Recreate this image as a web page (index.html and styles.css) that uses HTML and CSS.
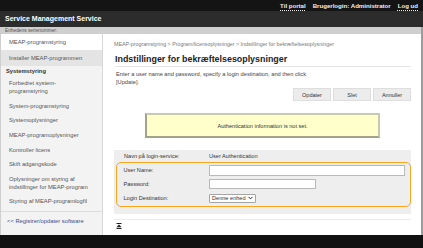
FILE: index.html
```html
<!DOCTYPE html>
<html lang="da">
<head>
<meta charset="utf-8">
<title>Service Management Service</title>
<link rel="stylesheet" href="styles.css">
</head>
<body>
<div class="page">
  <div class="topbar">
    <a class="toplink" href="#">Til portal</a>
    <span class="user">Brugerlogin: Administrator</span>
    <a class="toplink" href="#">Log ud</a>
  </div>
  <div class="header">Service Management Service</div>
  <div class="frame">
    <div class="serial">Enhedens serienummer:</div>
    <div class="main">
      <nav class="sidebar">
        <div class="nav-item nav-top">MEAP-programstyring</div>
        <div class="nav-item nav-current">Installer MEAP-programmen</div>
        <div class="nav-head">Systemstyring</div>
        <div class="nav-item">Forbedret system-<br>programstyring</div>
        <div class="nav-item">System-programstyring</div>
        <div class="nav-item">Systemoplysninger</div>
        <div class="nav-item">MEAP-programoplysninger</div>
        <div class="nav-item">Kontroller licens</div>
        <div class="nav-item">Skift adgangskode</div>
        <div class="nav-item">Oplysninger om styring af<br>indstillinger for MEAP-program</div>
        <div class="nav-item nav-last">Styring af MEAP-programlogfil</div>
        <div class="nav-link">&lt;&lt; Registrer/opdater software</div>
      </nav>
      <section class="content">
        <div class="crumbs">MEAP-programstyring &gt; Program/licensoplysninger &gt; Indstillinger for bekræftelsesoplysninger</div>
        <h1 class="title">Indstillinger for bekræftelsesoplysninger</h1>
        <p class="desc">Enter a user name and password, specify a login destination, and then click<br>[Update].</p>
        <div class="buttons">
          <button class="btn">Opdater</button>
          <button class="btn">Slet</button>
          <button class="btn">Annuller</button>
        </div>
        <div class="notice">Authentication information is not set.</div>
        <div class="panel">
          <div class="row row-plain">
            <span class="label">Navn på login-service:</span>
            <span class="value">User Authentication</span>
          </div>
          <div class="highlight">
            <div class="row">
              <span class="label">User Name:</span>
              <span class="input input-wide"></span>
            </div>
            <div class="row">
              <span class="label">Password:</span>
              <span class="input input-mid"></span>
            </div>
            <div class="row">
              <span class="label">Login Destination:</span>
              <span class="select"><span class="select-text">Denne enhed</span><svg class="chev" viewBox="0 0 6 4" width="5" height="4"><path d="M0.6 0.6 L3 3 L5.4 0.6" fill="none" stroke="#222" stroke-width="1.2"/></svg></span>
            </div>
          </div>
        </div>
        <div class="totop">
          <svg viewBox="0 0 6 6" width="6" height="6"><rect x="0.5" y="0" width="5" height="1" fill="#222"/><path d="M3 1.6 L5.6 4.2 L0.4 4.2 Z" fill="#222"/><rect x="0.5" y="5" width="5" height="1" fill="#222"/></svg>
        </div>
      </section>
    </div>
  </div>
  <div class="footer"></div>
</div>
</body>
</html>
```
FILE: styles.css
```css
*, *::before, *::after {
  box-sizing: border-box;
}
html, body {
  margin: 0;
  padding: 0;
  background: #ffffff;
}
body {
  font-family: "Liberation Sans", Arial, sans-serif;
  color: #333;
}
.page {
  width: 423px;
  height: 248px;
  overflow: hidden;
  display: flex;
  flex-direction: column;
}
.topbar {
  height: 11px;
  flex-shrink: 0;
  background: #141414;
  display: flex;
  justify-content: flex-end;
  align-items: center;
  gap: 7px;
  padding-right: 5px;
  font-size: 6.1px;
  font-weight: bold;
  color: #f0f0f0;
}
.toplink {
  color: #f0f0f0;
  text-decoration: underline dotted;
  text-underline-offset: 1.5px;
}
.user {
  color: #f0f0f0;
}
.header {
  height: 16px;
  flex-shrink: 0;
  background: #2c2c2c;
  color: #ffffff;
  font-weight: bold;
  font-size: 7px;
  line-height: 16px;
  padding-left: 5px;
}
.frame {
  flex: 1;
  display: flex;
  flex-direction: column;
  border-right: 2px solid #9d9d9d;
  min-height: 0;
}
.serial {
  height: 7px;
  flex-shrink: 0;
  background: #cfcfcf;
  font-size: 4.8px;
  line-height: 7px;
  color: #555;
  padding-left: 5px;
}
.main {
  flex: 1;
  display: flex;
  min-height: 0;
}
.sidebar {
  width: 103px;
  flex-shrink: 0;
  background: #f3f3f3;
  border-right: 1px solid #d8d8d8;
  border-left: 1px solid #cfcfcf;
  font-size: 5.8px;
  color: #555;
  display: flex;
  flex-direction: column;
}
.nav-item {
  padding: 3.3px 0 3.3px 8px;
  line-height: 8px;
}
.nav-top {
  background: #ffffff;
  padding-top: 4px;
  padding-bottom: 4px;
}
.nav-current {
  background: #e4e4e4;
  padding-top: 4px;
  padding-bottom: 4px;
}
.nav-head {
  font-weight: bold;
  color: #333;
  padding: 1px 0 1px 5px;
  line-height: 8px;
}
.nav-last {
  border-bottom: 1px solid #dcdcdc;
  padding-bottom: 5.5px;
}
.nav-link {
  padding: 5px 0 0 6px;
  line-height: 8px;
  color: #3a4d8f;
}
.content {
  flex: 1;
  padding: 6px 10px 0 11px;
  display: flex;
  flex-direction: column;
}
.crumbs {
  font-size: 5.3px;
  color: #777;
  line-height: 8px;
}
.title {
  margin: 5px 0 0 1px;
  font-size: 8.9px;
  font-weight: bold;
  color: #222;
  line-height: 12px;
  padding-bottom: 1px;
  border-bottom: 1px solid #e6e6e6;
}
.desc {
  margin: 3px 0 0 2px;
  font-size: 5.7px;
  line-height: 8px;
  color: #444;
}
.buttons {
  display: flex;
  justify-content: flex-end;
  gap: 2px;
  margin-top: 2px;
}
.btn {
  width: 38px;
  height: 13px;
  border: 1px solid #dedede;
  background: #ececec;
  font-family: "Liberation Sans", Arial, sans-serif;
  font-size: 5.5px;
  color: #333;
  padding: 0;
}
.notice {
  align-self: center;
  width: 235px;
  height: 25px;
  margin-top: 12px;
  background: #ffffcc;
  border: 2px solid #a3a38a;
  border-top-color: #c9c9b0;
  border-right-color: #c9c9b0;
  font-size: 5.6px;
  color: #333;
  display: flex;
  align-items: center;
  justify-content: center;
}
.panel {
  margin-top: 12px;
  background: #eeeeee;
  padding: 0 0 7px 3px;
}
.row {
  display: flex;
  align-items: center;
  height: 14px;
  font-size: 5.6px;
  color: #333;
}
.row-plain {
  height: 12px;
}
.label {
  width: 92px;
  padding-left: 7px;
  flex-shrink: 0;
}
.highlight {
  border: 1.5px solid #f7a51c;
  border-radius: 5px;
  margin-left: -1px;
  padding-bottom: 1px;
}
.highlight .label {
  width: 92px;
  padding-left: 6.5px;
}
.input {
  height: 11px;
  background: #fff;
  border: 1px solid #b9b9b9;
  display: block;
}
.input-wide {
  width: 196px;
}
.input-mid {
  width: 107px;
  height: 10px;
}
.select {
  height: 9px;
  background: #fff;
  border: 1px solid #a5a5a5;
  display: flex;
  align-items: center;
  gap: 2px;
  padding: 0 2px 0 2px;
  font-size: 5.6px;
  white-space: nowrap;
  border-radius: 1px;
}
.select-text {
  white-space: nowrap;
}
.chev {
  display: block;
  flex-shrink: 0;
}
.totop {
  margin-top: 5px;
  border-top: 1px solid #ececec;
  padding: 3px 0 0 2px;
}
.totop svg {
  display: block;
}
.footer {
  height: 13px;
  flex-shrink: 0;
  background: #111111;
}
```
